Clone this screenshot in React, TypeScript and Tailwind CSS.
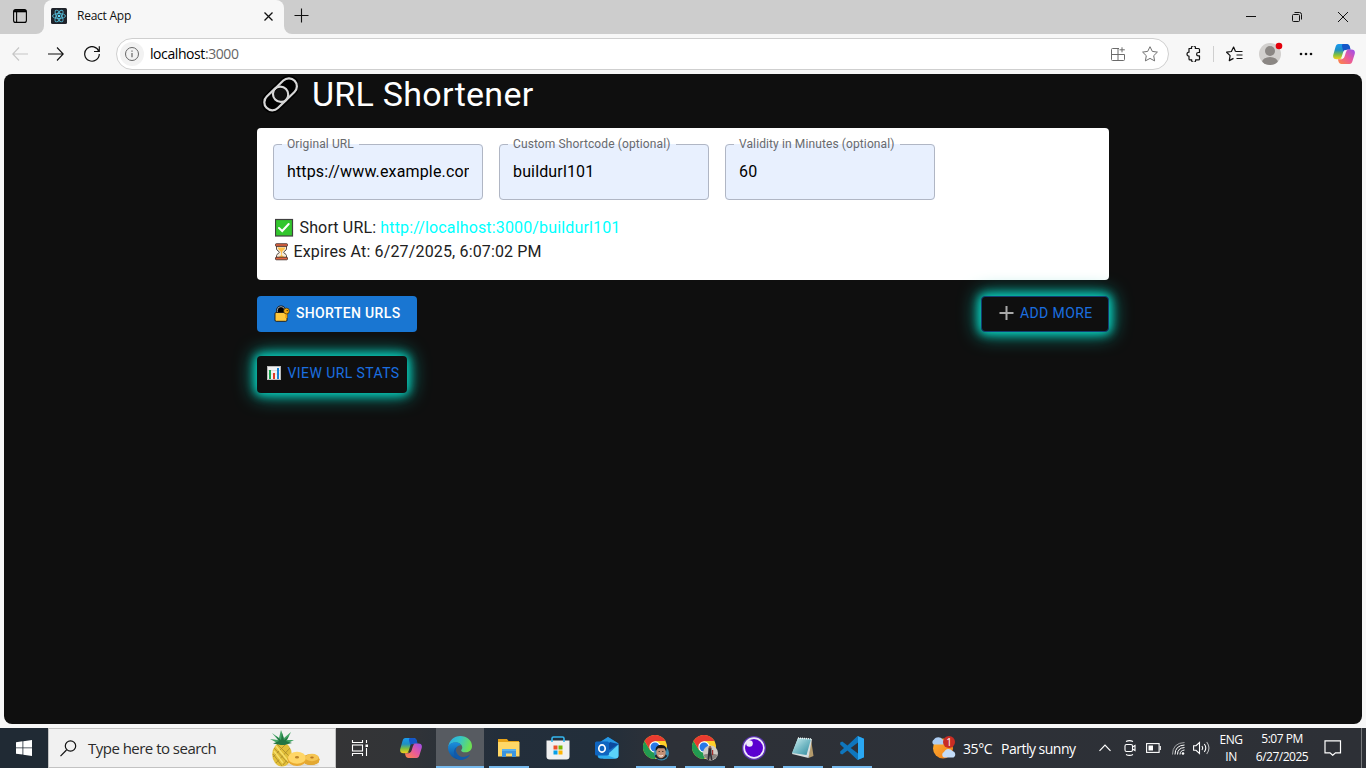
import React from "react";

function Copilot({ id, gap }: { id: string; gap: string }) {
  return (
    <svg width="22" height="20" viewBox="0 0 22 20" className="shrink-0">
      <defs>
        <linearGradient id={id + "a"} x1="0" y1="0" x2="0" y2="1">
          <stop offset="0" stopColor="#1a9bf0" />
          <stop offset=".4" stopColor="#1f8fc4" />
          <stop offset=".7" stopColor="#7fbf3f" />
          <stop offset="1" stopColor="#f7cf1d" />
        </linearGradient>
        <linearGradient id={id + "b"} x1="1" y1="0" x2="0" y2="1">
          <stop offset="0" stopColor="#9a4df0" />
          <stop offset=".5" stopColor="#ea5a9a" />
          <stop offset="1" stopColor="#ff8a3d" />
        </linearGradient>
      </defs>
      <path d="M5.500 0h8c1.600 0 2.600 1 3 2.500l.8 3h-3c-1.600 0-2.400.7-2.900 2.300l-1.700 5.200c-.5 1.500-1.300 2.200-2.800 2.200H3.500C.8 15.200-.4 13.300.3 10.800L2.500 3C3 1.200 3.900 0 5.500 0z" fill={`url(#${id}a)`} />
      <path d="M10 0h3.800c1.500 0 2.500 1 3 2.500l.8 3h-3.200c-1.500 0-2.400.7-2.900 2.300L10.800 9 9.200 3.200C8.700 1.500 9 0 10 0z" fill="#1557c8" />
      <path d="M16.500 20h-8c-1.600 0-2.600-1-3-2.500l-.6-2.300h2.800c1.600 0 2.400-.7 2.900-2.300L12.300 7.700c.5-1.500 1.300-2.200 2.800-2.200h3.400c2.700 0 3.900 1.900 3.200 4.400L19.500 17c-.5 1.800-1.400 3-3 3z" fill={`url(#${id}b)`} />
      <path d="M11.200 6.200h3.100c-.8.500-1.100 1.200-1.400 2l-1.300 4.200c-.3 1-.8 1.700-1.500 2H7.300c.8-.4 1.200-1.100 1.500-2l1.300-4.200c.2-.8.500-1.500 1.100-2z" fill={gap} />
    </svg>
  );
}

function TabStrip() {
  return (
    <div className="flex h-[34px] shrink-0 bg-[#cdcdcd]">
      <div className="flex w-11 items-center bg-[#f7f7f7]">
        <div className="flex h-full w-full items-center rounded-br-lg bg-[#cdcdcd] pl-[13px]">
          <svg className="-mt-[2px]" width="14" height="14" viewBox="0 0 14 14" fill="none" stroke="#000" strokeWidth="1.100">
            <rect x=".6" y=".6" width="12.800" height="12.800" rx="2" />
            <path d="M1 2.200h12" strokeWidth="2.200" />
            <path d="M3.600 3v10" />
          </svg>
        </div>
      </div>
      <div className="flex w-60 bg-[#cdcdcd]">
        <div className="flex w-full items-center rounded-t-lg bg-[#f7f7f7] pb-[2px] pl-[7px] pr-[10px]">
          <svg width="16" height="16" viewBox="0 0 16 16">
            <rect width="16" height="16" rx="1.500" fill="#20232a" />
            <g fill="none" stroke="#53b8d3" strokeWidth=".9">
              <ellipse cx="8" cy="8" rx="6.500" ry="2.500" />
              <ellipse cx="8" cy="8" rx="6.500" ry="2.500" transform="rotate(60 8 8)" />
              <ellipse cx="8" cy="8" rx="6.500" ry="2.500" transform="rotate(120 8 8)" />
            </g>
            <circle cx="8" cy="8" r="1.300" fill="#61dafb" />
          </svg>
          <span className="ml-[10px] text-[12px] leading-4 tracking-[-0.25px] text-[#111]">React App</span>
          <svg className="ml-auto" width="11" height="11" viewBox="0 0 11 11" stroke="#111" strokeWidth="1.300">
            <path d="M1.500 1.500l8 8M9.500 1.500l-8 8" />
          </svg>
        </div>
      </div>
      <div className="flex w-10 bg-[#f7f7f7]">
        <div className="flex h-full w-full items-center rounded-bl-lg bg-[#cdcdcd] pl-[10px]">
          <svg className="-mt-[3px]" width="15" height="15" viewBox="0 0 15 15" stroke="#111" strokeWidth="1.100">
            <path d="M7.500 .5v14M.5 7.500h14" />
          </svg>
        </div>
      </div>
      <div className="ml-auto flex items-center">
        <div className="flex w-[46px] justify-center">
          <svg width="10" height="10" viewBox="0 0 10 10" stroke="#111"><path d="M0 4.500h10" /></svg>
        </div>
        <div className="flex w-[46px] justify-center">
          <svg width="10" height="10" viewBox="0 0 10 10" fill="none" stroke="#111">
            <rect x=".5" y="2.500" width="7" height="7" rx="1" />
            <path d="M2.500 .5h5a2 2 0 0 1 2 2v5" />
          </svg>
        </div>
        <div className="flex w-[46px] justify-center">
          <svg width="10" height="10" viewBox="0 0 10 10" stroke="#111"><path d="M0 0l10 10M10 0L0 10" /></svg>
        </div>
      </div>
    </div>
  );
}

function Toolbar() {
  return (
    <div className="flex h-10 shrink-0 items-center bg-[#f7f7f7]">
      <svg className="ml-3 shrink-0" width="16" height="14" viewBox="0 0 16 14" fill="none" stroke="#c5c5c5" strokeWidth="1.100"><path d="M7 .5L.8 7l6.200 6.500M.8 7H16" /></svg>
      <svg className="ml-5 shrink-0" width="16" height="14" viewBox="0 0 16 14" fill="none" stroke="#111" strokeWidth="1.100"><path d="M9 .5L15.200 7 9 13.500M15.200 7H0" /></svg>
      <svg className="ml-5 shrink-0" width="16" height="16" viewBox="0 0 16 16" fill="none" stroke="#111" strokeWidth="1.200">
        <path d="M14.900 5.500A7.300 7.300 0 1 0 15.300 8M15.300 .3v5.200H10" />
      </svg>
      <div className="ml-4 flex h-8 w-[1053px] shrink-0 items-center rounded-full border border-[#cfcfcf] bg-white">
        <div className="ml-[3px] flex h-6 w-6 items-center justify-center rounded-full bg-[#f2f2f2]">
          <svg width="14" height="14" viewBox="0 0 14 14" fill="none" stroke="#666">
            <circle cx="7" cy="7" r="6.500" /><path d="M7 6v4.200M7 3.500v1.300" strokeWidth="1.200" />
          </svg>
        </div>
        <span className="ml-[6px] text-[14px] leading-5 tracking-[-0.42px] text-black">localhost<span className="text-[#666]">:3000</span></span>
        <svg className="ml-auto" width="14" height="14" viewBox="0 0 14 14" fill="none" stroke="#6b6b6b">
          <path d="M8 1.500H1.500a1 1 0 0 0-1 1V12.500a1 1 0 0 0 1 1h11a1 1 0 0 0 1-1V7.500H.500M7 1.500v12M11 .3v5M8.500 2.800h5.300" />
        </svg>
        <svg className="ml-[17px] mr-[10px]" width="16" height="16" viewBox="0 0 16 16" fill="none" stroke="#707070" strokeLinejoin="round">
          <path d="M8 .7l2.300 4.700 5.100.7-3.700 3.600.9 5.200L8 12.400l-4.600 2.500.9-5.200L.6 6.100l5.100-.7z" />
        </svg>
      </div>
      <svg className="ml-[17px] shrink-0" width="15" height="16" viewBox="0 0 15 16" fill="none" stroke="#111" strokeWidth="1.200" strokeLinejoin="round">
        <path d="M3 2.500h2.600a2 2 0 1 1 3.700 0h3.200a1 1 0 0 1 1 1v3h-1.200a1.700 1.700 0 0 0 0 3.400h1.200v3a1 1 0 0 1-1 1H9.600a2 2 0 1 1-3.900 0H4a1 1 0 0 1-1-1v-2.700a2 2 0 1 1 0-4z" />
      </svg>
      <div className="ml-3 h-4 w-px shrink-0 bg-[#cfcfcf]" />
      <svg className="ml-3 shrink-0" width="17" height="16" viewBox="0 0 17 16" fill="none" stroke="#111" strokeWidth="1.200" strokeLinejoin="round">
        <path d="M9.500 5.500L7.600 1 5.400 5.500.6 6.200l3.500 3.400-.8 5 4.200-2.200M9.500 5.500H16.500M10.500 9H16.500M10.500 12.500H16.500" />
      </svg>
      <svg className="ml-[16px] shrink-0" width="24" height="24" viewBox="0 0 24 24">
        <defs><clipPath id="av"><circle cx="11" cy="12" r="11" /></clipPath></defs>
        <circle cx="11" cy="12" r="11" fill="#d2d0ce" />
        <g fill="#8b8784" clipPath="url(#av)"><circle cx="11" cy="9" r="5" /><ellipse cx="11" cy="20.500" rx="8" ry="5.500" /></g>
        <circle cx="20" cy="4" r="3.300" fill="#e3000b" />
      </svg>
      <svg className="ml-[16px] shrink-0" width="14" height="4" viewBox="0 0 14 4" fill="#111"><circle cx="2" cy="2" r="1.300" /><circle cx="7" cy="2" r="1.300" /><circle cx="12" cy="2" r="1.300" /></svg>
      <div className="ml-5"><Copilot id="c1" gap="#f7f7f7" /></div>
    </div>
  );
}

const fields = [
  { label: "Original URL", value: "https://www.example.com" },
  { label: "Custom Shortcode (optional)", value: "buildurl101" },
  { label: "Validity in Minutes (optional)", value: "60" },
];

function Field({ label, value }: { label: string; value: string }) {
  return (
    <div className="relative h-14 w-[210px] rounded-[4px] bg-[#e8f0fe] px-[14px] py-4">
      <input
        className="block h-[23px] w-[182px] bg-transparent text-[16px] leading-[23px] tracking-[0.15px] text-black outline-none"
        defaultValue={value}
        aria-label={label}
      />
      <fieldset className="pointer-events-none absolute inset-x-0 top-[-5px] bottom-0 rounded-[4px] border border-[#b0b6c4] px-2">
        <legend className="invisible h-[11px] px-[5px] text-[12px] leading-[11px] whitespace-nowrap tracking-[0.14px]">{label}</legend>
      </fieldset>
      <span className="absolute top-[-8px] left-[14px] text-[12px] leading-[17px] tracking-[0.11px] whitespace-nowrap text-[#686a6e]">{label}</span>
    </div>
  );
}

function LinkIcon() {
  return (
    <svg width="36" height="38" viewBox="0 0 36 38" fill="none">
      <g transform="translate(.6 1.300) rotate(-44 18 18)">
        <g stroke="#000" strokeWidth="5.500" fill="#000">
          <rect x="-1.500" y="10" width="27" height="16" rx="8" />
          <rect x="10.500" y="10" width="27" height="16" rx="8" />
        </g>
        <circle cx="18" cy="18" r="6" fill="#101010" />
        <g stroke="#d6d6d6" strokeWidth="2.200">
          <rect x="-1.500" y="10" width="27" height="16" rx="8" />
          <rect x="10.500" y="10" width="27" height="16" rx="8" />
        </g>
      </g>
    </svg>
  );
}

function Page() {
  return (
    <main className="mx-1 h-[650px] shrink-0 overflow-hidden rounded-lg bg-[#0f0f0f] font-[Roboto,sans-serif]">
      <div className="ml-[253px] flex w-[852px] flex-col">
        <h1 className="mb-[14px] flex h-10 items-center text-[34px] leading-[40px] tracking-[0.28px] text-white">
          <span className="mr-[14px] ml-[5px]"><LinkIcon /></span>URL Shortener
        </h1>
        <section className="h-[152px] rounded-[4px] bg-white p-4">
          <div className="flex gap-4">{fields.map((f) => <Field key={f.label} {...f} />)}</div>
          <div className="mt-4 text-[16px] leading-6 tracking-[0.15px] text-[#212121]">
            <div className="flex items-center">
              <svg className="mr-[5px] ml-[1.5px]" width="20" height="20" viewBox="0 0 20 20">
                <rect x=".500" y="1.500" width="17" height="16.500" fill="#32c62d" stroke="#404040" strokeWidth="1.200" />
                <path d="M4 10l3.200 3 6.500-7" fill="none" stroke="#fff" strokeWidth="2" strokeLinecap="round" />
              </svg>
              <span>Short URL: <span className="text-[#00ffff]">http://localhost:3000/buildurl101</span></span>
            </div>
            <div className="flex items-center">
              <svg className="mr-[5px] ml-[1.5px]" width="14" height="18" viewBox="0 0 14 18">
                <path d="M1.500 3v3c0 1.500 3 2.500 3 3.300s-3 1.700-3 3.200V15h10v-2.500c0-1.500-3-2.400-3-3.200s3-1.800 3-3.300V3z" fill="#f3ead9" stroke="#4a4038" strokeWidth=".9" />
                <path d="M2.700 4.500h7.600c0 2-2.800 2.800-3.300 4.800L6.800 12l3.500 3h-7.600l3.500-3L6 9.300c-.5-2-3.300-2.800-3.300-4.800z" fill="#ffbe45" />
                <rect x=".5" y=".7" width="12" height="2.600" rx=".8" fill="#df6340" stroke="#3d2b28" strokeWidth=".8" />
                <rect x=".5" y="14.200" width="12" height="2.600" rx=".8" fill="#df6340" stroke="#3d2b28" strokeWidth=".8" />
              </svg>
              <span>Expires At: 6/27/2025, 6:07:02 PM</span>
            </div>
          </div>
        </section>
        <div className="mt-4 flex justify-between text-[14px] leading-6 tracking-[0.4px]">
          <button className="flex h-9 w-40 items-center rounded-[4px] bg-[#1976d2] pb-[2px] pl-[17px] font-medium text-white">
            <svg className="mr-[6px] shrink-0" width="16" height="17" viewBox="0 0 16 17">
              <path d="M3.500 8.500V5.500a3.500 3.500 0 0 1 7 0v3" fill="#000" stroke="#111" strokeWidth="2.800" />
              <path d="M3.300 8V5.300a3.700 3.700 0 0 1 7.400 0V8" fill="#000" stroke="#aeb8be" strokeWidth=".9" />
              <rect x="1" y="7.500" width="12" height="8.800" rx="1.200" fill="#ffc83d" stroke="#171717" strokeWidth=".9" />
              <path d="M12.300 7v6" stroke="#f0a30a" strokeWidth="2" />
              <circle cx="12.500" cy="6" r="2.900" fill="#f5a90c" stroke="#171717" strokeWidth=".6" />
              <circle cx="13.200" cy="5.600" r=".7" fill="#171717" />
            </svg>
            <span className="whitespace-nowrap tracking-[0.35px]">SHORTEN URLS</span>
          </button>
          <button className="flex h-9 w-32 items-center rounded-[4px] border border-[#123f73] bg-[#0f0f0f] pb-[2px] pl-[17px] text-[#1b6fe0] shadow-[0_0_10px_2px_#08cdbb,0_0_20px_2px_#08b5a5]">
            <svg className="mr-[6px] shrink-0" width="15" height="16" viewBox="0 0 15 16" stroke="#a9a9a9" strokeWidth="2"><path d="M7.500 1v14M.5 8h14" /></svg>
            <span className="whitespace-nowrap">ADD MORE</span>
          </button>
        </div>
        <button className="mt-6 flex h-[37px] w-[150px] items-center rounded-[4px] bg-[#0f0f0f] pb-[3px] pl-[10px] text-[14px] leading-6 tracking-[0.42px] text-[#1b6fe0] shadow-[0_0_10px_2px_#08cdbb,0_0_20px_2px_#08b5a5]">
          <svg className="mr-[6.500px] shrink-0" width="14" height="14" viewBox="0 0 14 14">
            <rect x=".5" y=".5" width="13" height="13" fill="#f1f1f1" stroke="#bbb" />
            <path d="M1 4.500h12M1 8h12" stroke="#cfcfcf" strokeWidth=".6" />
            <rect x="2" y="4" width="2" height="9" fill="#16a34a" /><rect x="6" y="7" width="2" height="6" fill="#e03b24" /><rect x="10" y="2" width="2" height="11" fill="#1683d8" />
          </svg>
          <span className="whitespace-nowrap">VIEW URL STATS</span>
        </button>
      </div>
    </main>
  );
}

function Pineapple() {
  return (
    <svg width="52" height="37" viewBox="0 0 52 37">
      <ellipse cx="32" cy="35" rx="18" ry="1.500" fill="#dedbd4" />
      <ellipse cx="13" cy="24.500" rx="9.800" ry="12" fill="#e2bf3a" />
      <g stroke="#a98a2b" strokeWidth=".8" fill="none"><path d="M5 18l14 15M8 14l14 14M4 24l9 12M21 18L7 33M17 14L4 27M22 25l-8 10" /></g>
      <path d="M7 16l12 15M5 21l9 12" stroke="#f7df6a" strokeWidth="1.500" />
      <g fill="#43a565"><path d="M12 15L1 9l8 1-6-7 7 5 2-8 3 8 7-6-4 8 7 0-10 5z" /><path d="M12 15L4 13.500 10 11 7 6l5 4 1-7 2 7 5-4-3 5 6 2-8 2z" fill="#237543" /></g>
      <ellipse cx="42" cy="29.500" rx="8.500" ry="5.500" fill="#dba02c" /><path d="M35 29h15.500l-1 4q-7 3-13 1z" fill="#e3a832" />
      <ellipse cx="28" cy="29.500" rx="9.500" ry="6.500" fill="#e9a92f" /><ellipse cx="28" cy="27.800" rx="9" ry="6" fill="#ffd667" /><ellipse cx="28" cy="27.300" rx="2" ry="1.200" fill="#bb842a" />
      <ellipse cx="43" cy="27.500" rx="6.800" ry="3.700" fill="#f5c553" /><ellipse cx="43" cy="27.500" rx="1.800" ry="1" fill="#b97825" />
    </svg>
  );
}

function Edge() {
  return (
    <svg width="24" height="24" viewBox="0 0 24 24">
      <defs>
        <linearGradient id="e1" x1="0" y1="0" x2="1" y2=".3"><stop offset="0" stopColor="#2ba8e8" /><stop offset=".5" stopColor="#35c4c8" /><stop offset="1" stopColor="#6bdf55" /></linearGradient>
        <linearGradient id="e2" x1="0" y1="0" x2="0" y2="1"><stop offset="0" stopColor="#1b8fdc" /><stop offset="1" stopColor="#0a4f9e" /></linearGradient>
      </defs>
      <path d="M.2 11C1 4.500 6 0 12.300 0 19 0 24 4.500 24 10c0 4-3 6.300-6.500 6.300-3 0-4.500-1-4.300-1.800.2-.8 1.100-1.300 1.100-2.900C14.300 8.500 11 6.500 7.500 6.500 4 6.500 1.300 8.400.2 11z" fill="url(#e1)" />
      <path d="M0 12c.3-3.500 3.500-5.700 7.500-5.700 3.300 0 5.500 1.600 5.500 3-4.500-.5-6 4-4.300 7.500 1.500 3.200 4.300 5 7.300 6A12 12 0 0 1 0 12z" fill="url(#e2)" />
      <path d="M9.500 10.500c-1.800 1.500-2.200 4-1 6.500 2 4.300 8 5.400 13.500 1.500-2 4-6 5.500-9.500 5.500C6 23 3 14 9.500 10.500z" fill="#1259a8" />
    </svg>
  );
}

function Explorer() {
  return (
    <svg width="22" height="18" viewBox="0 0 22 18">
      <path d="M0 0h9l1.500 2H21v15H0z" fill="#e8a317" /><path d="M0 3h21.500v14.500H0z" fill="#ffd766" />
      <path d="M4 18v-8h14v8h-4v-3.500H8V18z" fill="#3c95df" /><path d="M4 10h14v2H4z" fill="#57b0ee" />
    </svg>
  );
}

function Store() {
  return (
    <svg width="24" height="24" viewBox="0 0 24 24">
      <path d="M.5 4.500h23v16c0 2-1 3-3 3h-17c-2 0-3-1-3-3z" fill="#f0f0f0" />
      <path d="M6 6V2.500C6 1.500 6.500 1 7.500 1h9c1 0 1.500.5 1.500 1.500V6" fill="none" stroke="#35b7ee" strokeWidth="1.600" />
      <path d="M7.500 9.500h4v4h-4z" fill="#ee5128" /><path d="M12.500 9.500h4v4h-4z" fill="#7bb801" /><path d="M7.500 14.500h4v4h-4z" fill="#059fe8" /><path d="M12.500 14.500h4v4h-4z" fill="#ffb402" />
    </svg>
  );
}

function Outlook() {
  return (
    <svg width="24" height="22" viewBox="0 0 24 22">
      <path d="M2.500 6.500L13 0l10.500 6.500v12c0 2-1 3-3 3H6c-2.500 0-3.500-1-3.500-3z" fill="#1570c4" />
      <path d="M13 0l10.500 6.500L15 12 4 6z" fill="#2799e5" /><path d="M15 5l8.500 2-9 6-2-5z" fill="#0c4a9e" />
      <path d="M23.500 7.500v11c0 2-1 3-3 3H8z" fill="#5bd3f8" /><path d="M3 15l18 6.500H6c-2 0-3-1-3-3z" fill="#2eaef0" />
      <rect y="4.500" width="14" height="14" rx="1.500" fill="#0f65c0" /><ellipse cx="7" cy="11.500" rx="3.200" ry="3.600" fill="none" stroke="#fff" strokeWidth="1.700" />
    </svg>
  );
}

function Chrome({ second }: { second?: boolean }) {
  return (
    <svg width="26" height="26" viewBox="0 0 26 26">
      <circle cx="12" cy="12" r="12" fill="#ffcf29" />
      <path d="M1.600 6A12 12 0 0 0 12 24l5.200-9L7 15z" fill="#229a51" />
      <path d="M12 6h10.400A12 12 0 0 0 1.600 6L7 15z" fill="#e83b30" />
      <circle cx="12" cy="12" r="5.700" fill="#fff" /><circle cx="12" cy="12" r="4.500" fill="#2878e8" />
      {second ? (
        <g><circle cx="18.500" cy="18" r="7.500" fill="#d0cbc5" /><path d="M11.500 20c4-2 10-2 14 0a7.500 7.500 0 0 1-14 0z" fill="#8b8580" /><path d="M16.500 13h3v6l1 6h-1.500l-1-5-1 5h-1.500z" fill="#302d35" /><circle cx="18" cy="12.300" r="1.300" fill="#8d5e4d" /><path d="M20 15h1.200v5H20z" fill="#a3302c" /></g>
      ) : (
        <g><circle cx="18.500" cy="18" r="7.500" fill="#3a8db2" /><path d="M11.700 21c1-2 4-2 6.500-2s5 0 6 2a7.500 7.500 0 0 1-12.500 0z" fill="#22252b" /><ellipse cx="18" cy="17.500" rx="4.700" ry="5.700" fill="#c49075" /><path d="M12.700 16c-.7-5 3-6.500 5.800-6 4 0 5.500 3 4.700 6.500L21.500 13.300h-6.500z" fill="#181515" /><path d="M15.700 20.300c1.500 1 3 1 4.500 0" stroke="#fff" fill="none" /><path d="M15.500 16.500h1.500M19 16.500h1.500" stroke="#2b1b17" strokeWidth=".7" /></g>
      )}
    </svg>
  );
}

function Insomnia() {
  return (
    <svg width="24" height="24" viewBox="0 0 24 24">
      <circle cx="12" cy="12" r="12" fill="#5b35ad" /><circle cx="12" cy="12" r="10.700" fill="#eee9fa" /><circle cx="12" cy="12" r="9" fill="#5b00d0" /><circle cx="7.500" cy="7.500" r="3.300" fill="#eee9fa" />
    </svg>
  );
}

function Notepad() {
  return (
    <svg width="24" height="22" viewBox="0 0 24 22">
      <defs><linearGradient id="np" x1="0" y1="0" x2="1" y2="1"><stop stopColor="#d5f3f5" /><stop offset=".5" stopColor="#79bcc7" /><stop offset="1" stopColor="#2f8a9e" /></linearGradient></defs>
      <path d="M20 2l2.500 17-5 2z" fill="#b39a6b" /><path d="M7 1l14 1-3.500 19-16.500-4z" fill="#d6dedf" /><path d="M7 1l13 1-4.500 16L1 16z" fill="url(#np)" /><path d="M7 1l13 1" stroke="#eef7f7" strokeWidth="1.500" strokeDasharray="1 1" />
    </svg>
  );
}

function VSCode() {
  return (
    <svg width="24" height="24" viewBox="0 0 24 24">
      <path d="M17.500 0L7.500 9.600 2.200 5.600.2 6.500v2L4 12 .2 15.500v2l2 .9 5.300-4L17.500 24 24 21.200V2.800zM10.700 12L18 6.400v11.200z" fill="#0f76bd" fillRule="evenodd" />
      <path d="M17.500 0L24 2.800v18.400L17.500 24c.4-.3.500-.8.500-1.500v-21c0-.7-.1-1.200-.5-1.500z" fill="#2aa7f2" />
    </svg>
  );
}

const apps = [
  { icon: <Edge />, open: false, active: true },
  { icon: <Explorer />, open: true },
  { icon: <Store />, open: false },
  { icon: <Outlook />, open: false },
  { icon: <Chrome />, open: true },
  { icon: <Chrome second />, open: true },
  { icon: <Insomnia />, open: true },
  { icon: <Notepad />, open: true },
  { icon: <VSCode />, open: true },
];

function Taskbar() {
  return (
    <div className="flex h-10 shrink-0 bg-[linear-gradient(90deg,#202a34_0px,#202a34_48px,#343436_336px,#323437_400px,#232e3b_500px,#222e3a_600px,#2d3138_660px,#2d3036_1366px)] text-white">
      <div className="flex w-12 items-center justify-center">
        <svg width="16" height="16" viewBox="0 0 16 16" fill="#fff"><path d="M0 2.300L6.500 1.300v6.200H0zM7.300 1.200L16 0v7.500H7.300zM0 8.300h6.500v6.200L0 13.700zM7.300 8.300H16V16l-8.700-1.200z" /></svg>
      </div>
      <div className="flex w-72 items-center border border-[#c2c2c2] bg-[#f1f1f1] pl-[11px]">
        <svg width="17" height="17" viewBox="0 0 17 17" fill="none" stroke="#111" strokeWidth="1.200"><circle cx="10.500" cy="6" r="5.200" /><path d="M6.500 10L.5 16.200" /></svg>
        <span className="ml-[11px] text-[15px] tracking-[-0.52px] whitespace-nowrap text-[#2b2b2b]">Type here to search</span>
        <div className="mr-[14px] ml-auto"><Pineapple /></div>
      </div>
      <div className="flex w-12 items-center justify-center">
        <svg width="18" height="16" viewBox="0 0 18 16" fill="none" stroke="#fff" strokeWidth="1.100">
          <path d="M1.500 0v2.500h10V0M1.500 16v-2.500h10V16M15.500 0v3M15.500 8v8" /><rect x="1.500" y="5" width="10" height="6" /><rect x="14.500" y="4.500" width="2.500" height="2.500" fill="#fff" stroke="none" />
        </svg>
      </div>
      <div className="flex w-[52px] items-center justify-center pl-[2px]"><Copilot id="c2" gap="#323437" /></div>
      <div className="flex">
        {apps.map((a, i) => (
          <div key={i} className={a.active ? "mr-px flex h-10 w-12 flex-col items-center bg-[#575b61]" : "mr-px flex h-10 w-12 flex-col items-center"}>
            <div className="flex h-[38px] items-center justify-center pt-[2px]">{a.icon}</div>
            <div className={a.active ? "h-[2px] w-12 bg-[#76b9ed]" : a.open ? "h-[2px] w-10 bg-[#76b9ed]" : "h-[2px]"} />
          </div>
        ))}
      </div>
      <div className="ml-auto flex items-center">
        <svg width="25" height="24" viewBox="0 0 25 24">
          <defs><linearGradient id="sun" x1="0" y1="0" x2="1" y2="1"><stop stopColor="#ffb331" /><stop offset="1" stopColor="#f07919" /></linearGradient></defs>
          <circle cx="12" cy="12.500" r="10" fill="url(#sun)" />
          <path d="M2.500 8.500a3 3 0 0 1 .5-5 5 5 0 0 1 8.500 0 3 3 0 0 1 1 5z" fill="#adcdf2" />
          <path d="M13 21.500a3 3 0 0 1 0-5.500 5 5 0 0 1 8.500-1 3.500 3.500 0 0 1 1 6.500z" fill="#c3dcf8" />
          <circle cx="18" cy="6" r="6" fill="#c92d24" />
          <text x="18" y="9.500" textAnchor="middle" fontSize="10" fill="#fff">1</text>
        </svg>
        <span className="ml-[7px] w-[38px] text-[14px] tracking-[-0.4px] whitespace-nowrap">35°C</span>
        <span className="w-[98px] text-[14px] tracking-[-0.5px] whitespace-nowrap">Partly sunny</span>
        <svg width="12" height="8" viewBox="0 0 12 8" fill="none" stroke="#fff" strokeWidth="1.200"><path d="M.5 6.800L6 1.200l5.500 5.600" /></svg>
        <svg className="ml-[13px]" width="12" height="16" viewBox="0 0 12 16" fill="none" stroke="#fff" strokeWidth="1.100"><rect x="1" y="4.500" width="7.500" height="7" rx="1.500" /><path d="M8.500 7l2.500-1.500v5L8.500 9M2 1.500Q5.500-.3 9 1.500M2 14.500q3.500 1.800 7 0" /></svg>
        <svg className="ml-[10px]" width="15" height="10" viewBox="0 0 15 10" fill="none" stroke="#fff" strokeWidth="1.100"><rect x=".6" y=".6" width="12.500" height="8.800" /><path d="M14.300 3v4" /><rect x="2.500" y="2.500" width="4.500" height="5" fill="#fff" stroke="none" /></svg>
        <svg className="ml-[11px]" width="13" height="13" viewBox="0 0 13 13" fill="none" stroke="#fff" strokeWidth="1"><circle cx="11" cy="11.500" r="1.300" fill="#fff" stroke="none" /><path d="M8 12.500q0-4 4.500-4.500M5.500 12.500q0-6.500 7-7M3 12.500Q3 3.500 12.500 3" /><path d="M.5 12.500Q.5 1 12.500.5" stroke="#a0a2a5" /></svg>
        <svg className="ml-[8px]" width="17" height="14" viewBox="0 0 17 14" fill="none" stroke="#fff" strokeWidth="1.100"><path d="M.6 4.700H3L6.500 1.500v11L3 9.300H.6zM9 5q1.500 2 0 4M11.300 3q3 4 0 8" /><path d="M13.700 1q4.500 6 0 12" stroke="#b5b7b9" /></svg>
        <div className="ml-2 flex w-[26px] flex-col items-center text-[12px] leading-[17px] tracking-[-0.4px]"><span>ENG</span><span>IN</span></div>
        <div className="ml-2 flex w-[60px] flex-col items-center text-[12px] leading-[18px] tracking-[-0.5px] whitespace-nowrap"><span>5:07 PM</span><span>6/27/2025</span></div>
        <svg className="mr-[19px] ml-[12px]" width="18" height="16" viewBox="0 0 18 16" fill="none" stroke="#fff" strokeWidth="1.200"><path d="M1 .8h15.500v12H11.500L8.700 15.300 6 12.800H1z" /></svg>
        <div className="mr-[4px] h-10 w-px bg-[#77797c]" />
      </div>
    </div>
  );
}

export default function App() {
  return (
    <div className="flex h-[768px] w-[1366px] flex-col overflow-hidden bg-[#f7f7f7] font-['Open_Sans','Noto_Sans',sans-serif]">
      <TabStrip />
      <Toolbar />
      <Page />
      <div className="mt-auto"><Taskbar /></div>
    </div>
  );
}
